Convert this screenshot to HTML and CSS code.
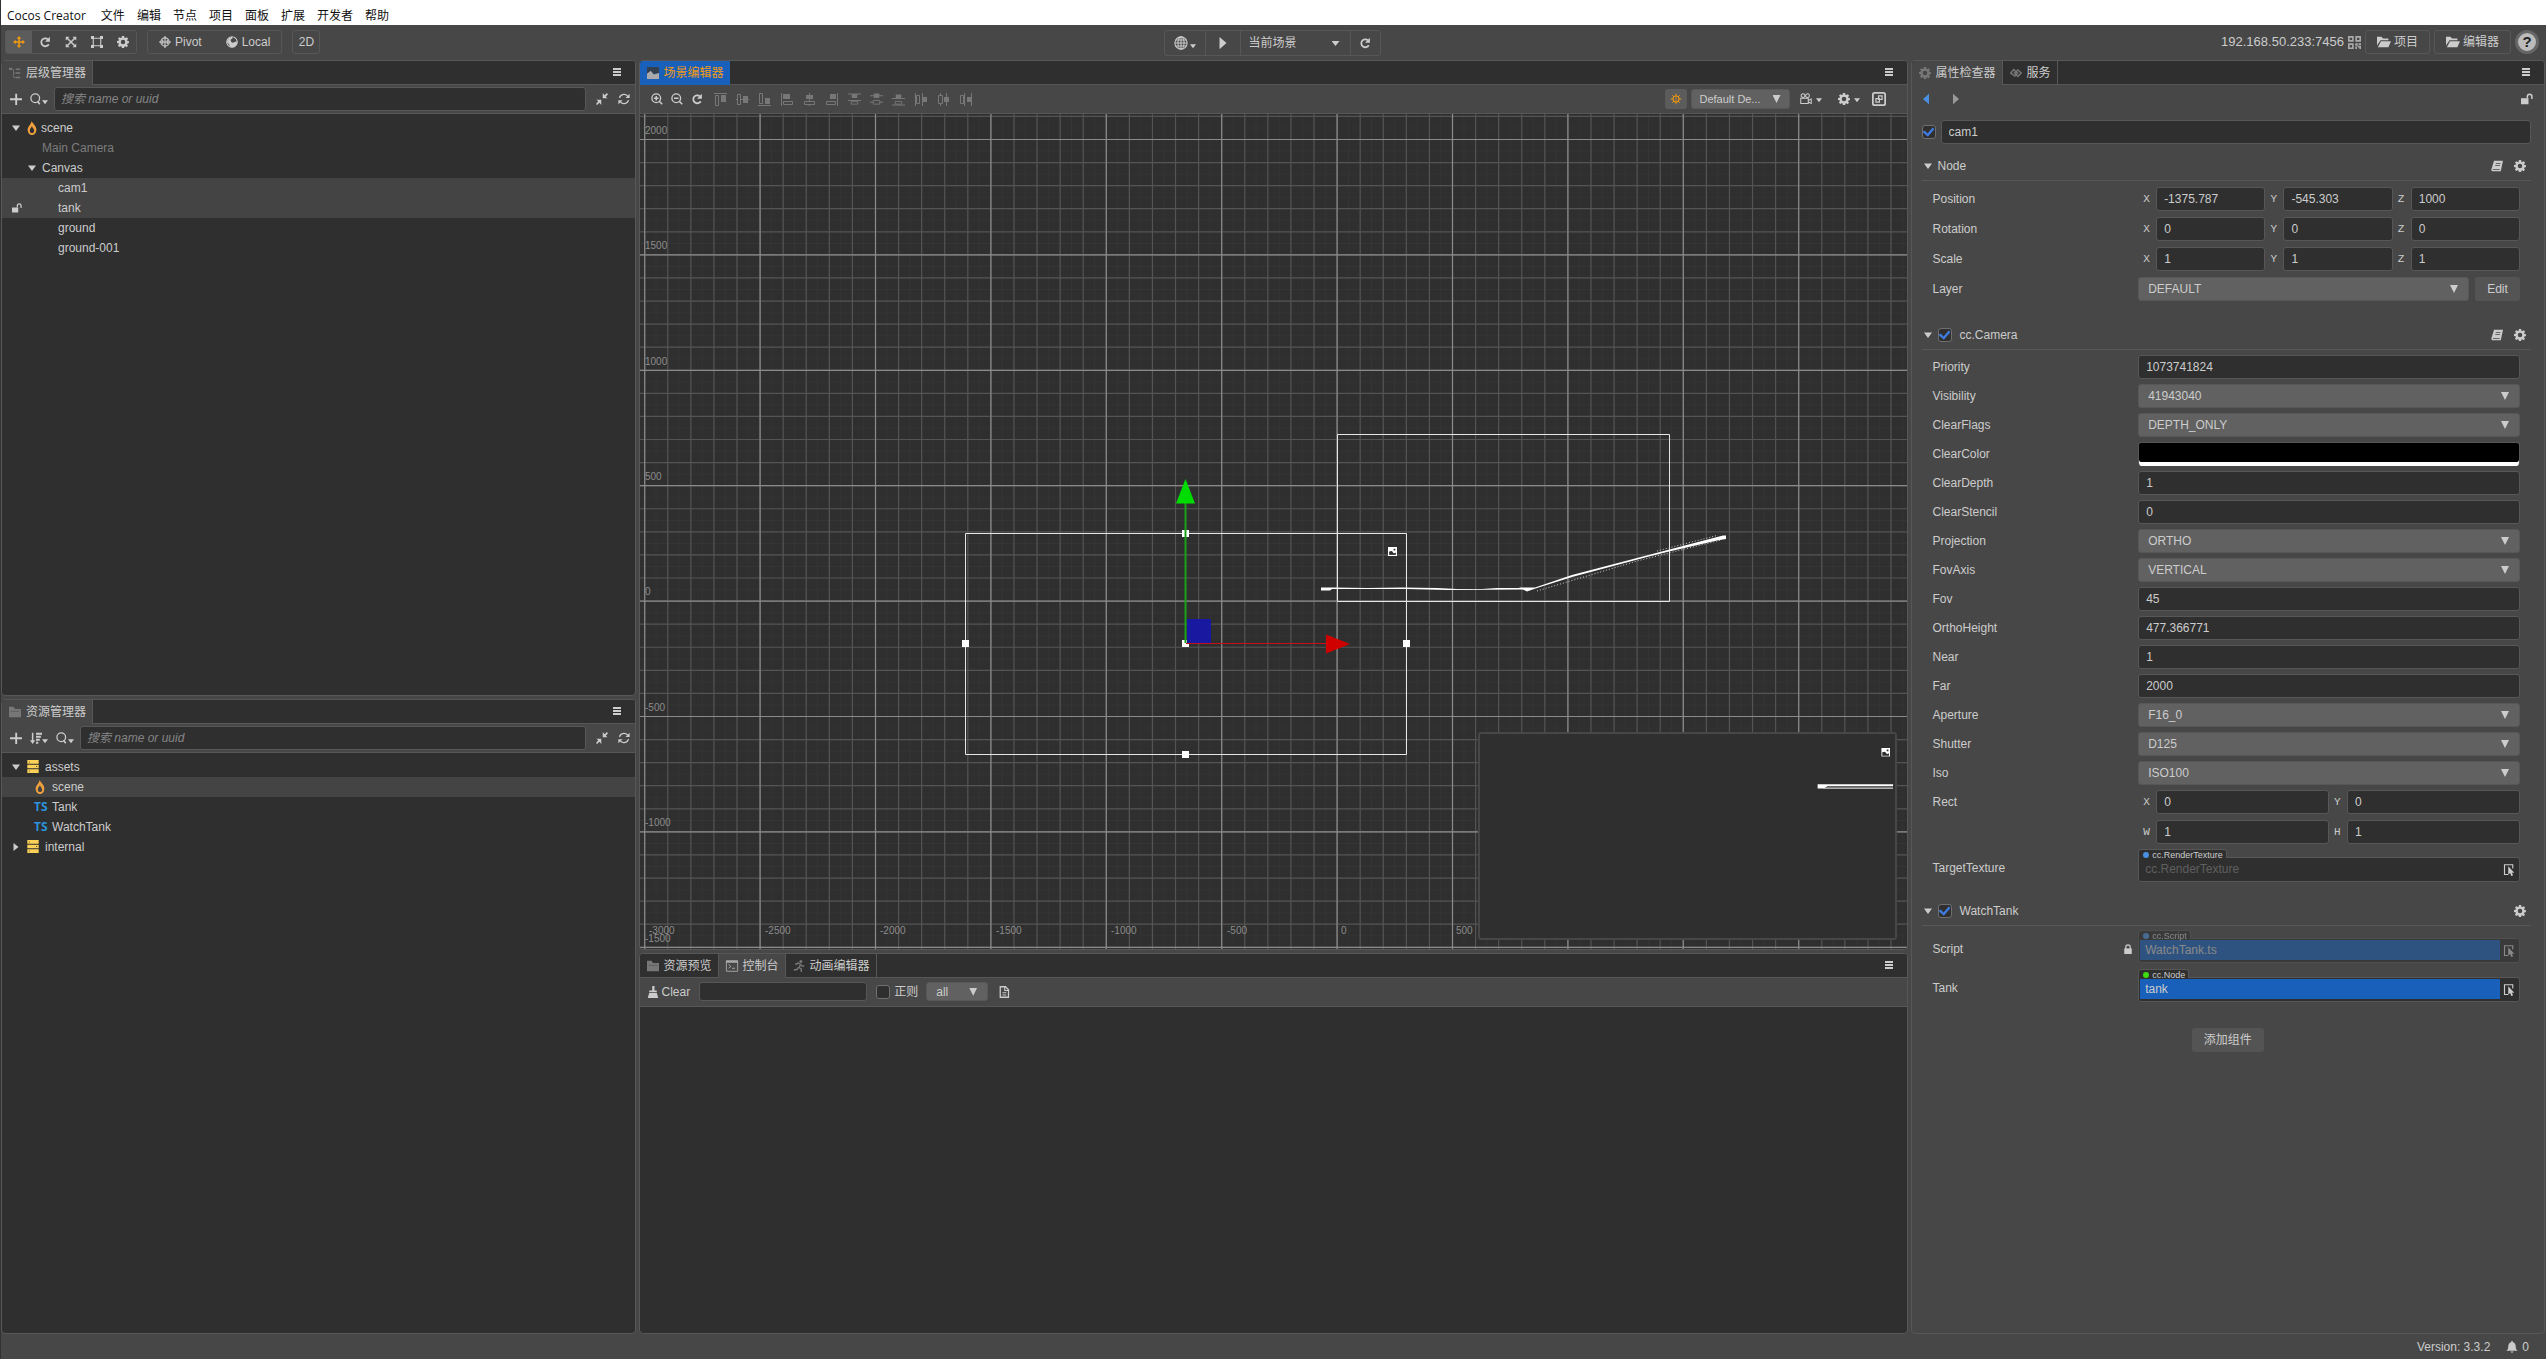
FILE: index.html
```html
<!DOCTYPE html>
<html lang="zh-CN">
<head>
<meta charset="utf-8">
<title>Cocos Creator</title>
<link rel="stylesheet" href="styles.css">
</head>
<body>
<svg class="defs" aria-hidden="true">
  <symbol id="i-move" viewBox="0 0 16 16"><path d="M8 0l3 3.500H9V7h3.500V5L16 8l-3.500 3V9H9v3.500h2L8 16l-3-3.500h2V9H3.500v2L0 8l3.500-3v2H7V3.500H5z"/></symbol>
  <symbol id="i-rotate" viewBox="0 0 16 16"><path d="M12 4.500A5.300 5.300 0 1 0 13 11" fill="none" stroke="currentColor" stroke-width="2.400"/><path d="M14.500 1v6.500H8z"/></symbol>
  <symbol id="i-scale" viewBox="0 0 16 16"><path d="M3 3l10 10M13 3L3 13" stroke="currentColor" stroke-width="2"/><path d="M1 1h5L1 6zM15 1v5l-5-5zM1 15v-5l5 5zM15 15h-5l5-5z"/></symbol>
  <symbol id="i-rect" viewBox="0 0 16 16"><path d="M3 3h10v10H3z" fill="none" stroke="currentColor" stroke-width="1.500"/><path d="M0 0h4v4H0zM12 0h4v4h-4zM0 12h4v4H0zM12 12h4v4h-4z"/></symbol>
  <symbol id="i-gear" viewBox="0 0 16 16"><path fill-rule="evenodd" d="M6.500 0h3l.4 2.200 1.300.6L13 1.500 14.900 3.600 13.500 5.300l.4 1.200L16 7v2.400l-2.100.5-.5 1.300 1.300 1.800-2 1.900-1.700-1.200-1.200.5L9.500 16h-3l-.4-2-1.300-.5L3 14.700 1.200 12.800l1.300-1.700L2 9.700 0 9.300V6.800l2.100-.5.5-1.200L1.300 3.400l2-1.900L5 2.700l1.200-.5zM8 5a3 3 0 1 0 0 6 3 3 0 0 0 0-6z"/></symbol>
  <symbol id="i-pivot" viewBox="0 0 16 16"><path d="M8 0v16M0 8h16M5 5v6M11 5v6" stroke="currentColor" stroke-width="1.500"/><circle cx="8" cy="8" r="5.500" fill="none" stroke="currentColor" stroke-width="1.600"/></symbol>
  <symbol id="i-local" viewBox="0 0 16 16"><circle cx="8" cy="8" r="7" fill="none" stroke="currentColor" stroke-width="1.500"/><path d="M1 8l3-5 4-2 1 2-3 2 1 3 2 1 5-2 1 3-4 5H6l-2-4z"/></symbol>
  <symbol id="i-globe" viewBox="0 0 16 16"><g fill="none" stroke="currentColor" stroke-width="1.200"><circle cx="8" cy="8" r="7"/><ellipse cx="8" cy="8" rx="3.500" ry="7"/><path d="M8 1v14M1 8h14M2 4.500h12M2 11.500h12"/></g></symbol>
  <symbol id="i-play" viewBox="0 0 16 16"><path d="M4 1l8 7-8 7z"/></symbol>
  <symbol id="i-back" viewBox="0 0 16 16"><path d="M12 1L4 8l8 7z"/></symbol>
  <symbol id="i-down" viewBox="0 0 16 16"><path d="M0 3h16L8 14z"/></symbol>
  <symbol id="i-right" viewBox="0 0 16 16"><path d="M3 0l10 8-10 8z"/></symbol>
  <symbol id="i-tree" viewBox="0 0 16 16"><path d="M0 1h4v3H0zM9 2h6v2H9zM9 7h6v2H9zM9 13h6v2H9z"/><path d="M2 3h4v11h4M6 8h3" fill="none" stroke="currentColor"/></symbol>
  <symbol id="i-plus" viewBox="0 0 16 16"><path d="M7 1h2.500v6H16v2.500H9.500V16H7V9.500H0V7h7z"/></symbol>
  <symbol id="i-search" viewBox="0 0 16 16"><circle cx="7" cy="7" r="5.800" fill="none" stroke="currentColor" stroke-width="1.700"/><path d="M10 11l3 4" stroke="currentColor" stroke-width="2"/></symbol>
  <symbol id="i-collapse" viewBox="0 0 16 16"><path d="M9 0v7h6.500L13 5l3-3.500L14.500 0 11.500 3zM7 16V9H.5L3 11l-3 3.500L1.500 16l3-3z"/></symbol>
  <symbol id="i-sync" viewBox="0 0 16 16"><path d="M2 6.500A6.300 6.300 0 0 1 13.500 5M14 9.500A6.300 6.300 0 0 1 2.500 11" fill="none" stroke="currentColor" stroke-width="1.700"/><path d="M15.500 1v5.500H10zM.5 15V9.500H6z"/></symbol>
  <symbol id="i-flame" viewBox="2 0 12 16"><path fill-rule="evenodd" d="M7.500 0c1 3 5.500 5 5.500 10a5 6 0 0 1-10 0C3 6.500 7 4 7.500 0zM8 6c-1 2-2.500 2.500-2.500 5 0 3.500 5 3.500 5 0C10.500 9 8.500 8 8 6z"/></symbol>
  <symbol id="i-unlock" viewBox="0 0 16 16"><path d="M0 7h10v8H0z"/><path d="M8.500 7V4.500a3 3 0 0 1 6 0V8" fill="none" stroke="currentColor" stroke-width="2"/></symbol>
  <symbol id="i-lock" viewBox="0 0 16 16"><path d="M2 7h12v9H2z"/><path d="M4.500 8V5a3.500 3.500 0 0 1 7 0v3" fill="none" stroke="currentColor" stroke-width="2"/></symbol>
  <symbol id="i-db" viewBox="0 0 16 16"><path fill-rule="evenodd" d="M1 0h14v4.500H1zM1 5.800h14v4.500H1zM1 11.500h14V16H1zM3 2v1h1V2zM12 7.500v1h1v-1zM3 13.200v1h1v-1z"/></symbol>
  <symbol id="i-sort" viewBox="0 0 16 16"><path d="M2.500 1h2v10H7l-3.500 5L0 11h2.500zM8 1h8v2.500H8zM8 5h6.500v2.500H8zM8 9h5v2.500H8zM8 13h3v2.500H8z"/></symbol>
  <symbol id="i-openfolder" viewBox="0 0 16 16"><path d="M0 12V2h5l2 2h6v2H4zM4.500 7H16l-3 7H1z"/></symbol>
  <symbol id="i-folder" viewBox="0 0 16 16"><path d="M0 1h6l2 3h8v11H0z"/><path d="M2 7h12" stroke="#555"/></symbol>
  <symbol id="i-qr" viewBox="0 0 16 16"><path fill-rule="evenodd" d="M0 0h7v7H0zM2 2v3h3V2zM9 0h7v7H9zM11 2v3h3V2zM0 9h7v7H0zM2 11v3h3v-3zM9 9h3v3H9zM13 9h3v2h-3zM9 13h2v3H9zM12 12h4v4h-2v-2h-2z"/></symbol>
  <symbol id="i-menu" viewBox="0 0 16 16"><path d="M0 0h16v4H0zM0 6h16v4H0zM0 12h16v4H0z"/></symbol>
  <symbol id="i-image" viewBox="0 0 16 16"><path fill-rule="evenodd" d="M0 0h16v16H0zM2 8v6h12v-4l-4 1-3-4zM10 3h3v3h-3z"/></symbol>
  <symbol id="i-scene" viewBox="0 0 16 16"><path d="M0 0h16v9H0z" fill="#33404f"/><path d="M0 9l5-4 4 5 7-2v8H0z"/></symbol>
  <symbol id="i-zoomin" viewBox="0 0 16 16"><circle cx="7" cy="7" r="5.800" fill="none" stroke="currentColor" stroke-width="1.800"/><path d="M11 11l4 4M7 4v6M4 7h6" stroke="currentColor" stroke-width="2"/></symbol>
  <symbol id="i-zoomout" viewBox="0 0 16 16"><circle cx="7" cy="7" r="5.800" fill="none" stroke="currentColor" stroke-width="1.800"/><path d="M11 11l4 4M4 7h6" stroke="currentColor" stroke-width="2"/></symbol>
  <symbol id="i-al1" viewBox="0 0 13 13"><path d="M0 0h13v1H0zM7 2h5v7H7z"/><path d="M1.500 2.500h3v10h-3z" fill="none" stroke="currentColor"/></symbol>
  <symbol id="i-al2" viewBox="0 0 13 13"><path d="M0 6h13v1H0zM7 3h5v7H7z"/><path d="M1.500 1.500h3v10h-3z" fill="#474747" stroke="currentColor"/></symbol>
  <symbol id="i-al3" viewBox="0 0 13 13"><path d="M0 12h13v1H0zM7 5h5v6H7z"/><path d="M1.500 .5h3v10h-3z" fill="none" stroke="currentColor"/></symbol>
  <symbol id="i-al4" viewBox="0 0 13 13"><path d="M0 0h1v13H0zM2 1h7v5H2z"/><path d="M2.500 8.500h9v3h-9z" fill="none" stroke="currentColor"/></symbol>
  <symbol id="i-al5" viewBox="0 0 13 13"><path d="M6 0h1v13H6zM3 2h7v4H3z"/><path d="M1.500 8.500h10v3h-10z" fill="#474747" stroke="currentColor"/></symbol>
  <symbol id="i-al6" viewBox="0 0 13 13"><path d="M12 0h1v13h-1zM5 1h6v5H5z"/><path d="M1.500 8.500h9v3h-9z" fill="none" stroke="currentColor"/></symbol>
  <symbol id="i-al7" viewBox="0 0 14 13"><path d="M0 0h14v1H0zM4 1h6v4H4zM0 7h14v1H0z"/><path d="M3.500 8.500h7v3h-7z" fill="none" stroke="currentColor"/></symbol>
  <symbol id="i-al8" viewBox="0 0 14 13"><path d="M0 2h14v1H0zM4 0h6v5H4zM0 9h14v1H0z"/><path d="M3.500 7.500h7v4h-7z" fill="#474747" stroke="currentColor"/></symbol>
  <symbol id="i-al9" viewBox="0 0 14 13"><path d="M0 5h14v1H0zM4 1h6v4H4zM0 12h14v1H0z"/><path d="M3.500 8.500h7v3h-7z" fill="none" stroke="currentColor"/></symbol>
  <symbol id="i-al10" viewBox="0 0 13 13"><path d="M0 0h1v13H0zM7 0h1v13H7zM8 4h4v5H8z"/><path d="M1.500 2.500h3v8h-3z" fill="none" stroke="currentColor"/></symbol>
  <symbol id="i-al11" viewBox="0 0 13 13"><path d="M3 0h1v13H3zM9 0h1v13H9zM7 4h5v5H7z"/><path d="M1.500 2.500h4v8h-4z" fill="#474747" stroke="currentColor"/></symbol>
  <symbol id="i-al12" viewBox="0 0 13 13"><path d="M5 0h1v13H5zM12 0h1v13h-1zM8 4h4v5H8z"/><path d="M1.500 2.500h3v8h-3z" fill="none" stroke="currentColor"/></symbol>
  <symbol id="i-sun" viewBox="0 0 16 16"><path d="M8 1v14M1 8h14M3 3l10 10M13 3L3 13" stroke="currentColor" stroke-width="1.300"/><circle cx="8" cy="8" r="4" fill="#5a5a5a" stroke="currentColor" stroke-width="1.400"/><path d="M8 5v6" stroke="currentColor"/></symbol>
  <symbol id="i-camera" viewBox="0 0 16 16"><g fill="none" stroke="currentColor" stroke-width="1.400"><circle cx="4" cy="3.500" r="2.500"/><circle cx="10" cy="3.500" r="2.500"/><path d="M1 7h10v7H1zM11 10l4-2v6l-4-2"/></g></symbol>
  <symbol id="i-expand" viewBox="0 0 16 16"><rect x="1" y="1" width="14" height="14" rx="2" fill="none" stroke="currentColor" stroke-width="2"/><path d="M4.500 7.500h4v4h-4zM7.500 4.500h4v4h-4z" fill="none" stroke="currentColor" stroke-width="1.400"/></symbol>
  <symbol id="i-console" viewBox="0 0 16 16"><path d="M.5 1h15v14H.5z" fill="none" stroke="currentColor" stroke-width="1.200"/><path d="M0 1h16v2.500H0z"/><path d="M3.500 6l3 2.500-3 2.500M8 11h4" fill="none" stroke="currentColor" stroke-width="1.300"/></symbol>
  <symbol id="i-run" viewBox="0 0 16 16"><circle cx="10.500" cy="2" r="2"/><path d="M3 6l4-2 3 2-2 4 3 2v4M7 10l-2 3H1M10 6l2 2h3" fill="none" stroke="currentColor" stroke-width="1.900"/></symbol>
  <symbol id="i-brush" viewBox="0 0 16 16"><path d="M7 0h3v6h3v2H3V6h4zM3 9h10l2 7H1z"/></symbol>
  <symbol id="i-doc" viewBox="0 0 16 16"><path d="M3 1h7l4 4v10H3z" fill="none" stroke="currentColor" stroke-width="1.700"/><path d="M9 1v5h5M6 9h5M6 12h5" fill="none" stroke="currentColor" stroke-width="1.500"/></symbol>
  <symbol id="i-book" viewBox="0 0 16 16"><path fill-rule="evenodd" d="M4 1h12l-3 14H1.500Q-.5 13 1 11zM6.500 4l-.3 1h6.300l.3-1zM5.800 6.600l-.3 1H12l.3-1zM2.500 12.300l-.3 1H11.500l.3-1z"/></symbol>
  <symbol id="i-pick" viewBox="0 0 16 16"><path d="M13 6V1H2v13h5" fill="none" stroke="currentColor" stroke-width="1.500"/><path d="M7 3v11l2.500-2 1.500 4 2.500-1-1.700-3.500H15z"/></symbol>
  <symbol id="i-link" viewBox="0 0 16 16"><g fill="none" stroke="currentColor" stroke-width="2"><path d="M5 3.500l5 4.500-3.500 4L1 8z"/><path d="M10.500 4L15 8l-4.500 4.500L6 8z"/></g></symbol>
  <symbol id="i-bell" viewBox="0 0 16 16"><path d="M7 0h2v1.500c3 .5 4 3 4 6 0 3 1 4 2.500 5.500H.5C2 11.500 3 10.500 3 7.500c0-3 1-5.500 4-6zM6 14h4q-2 3.500-4 0z"/></symbol>
</svg>

<nav class="menubar" aria-label="主菜单">
  <a class="app" href="#">Cocos Creator</a><a href="#">文件</a><a href="#">编辑</a><a href="#">节点</a><a href="#">项目</a><a href="#">面板</a><a href="#">扩展</a><a href="#">开发者</a><a href="#">帮助</a>
</nav>

<header class="topbar">
  <div class="cluster">
    <div class="group tools">
      <button class="on" aria-label="移动"><svg class="ic"><use href="#i-move"/></svg></button>
      <button aria-label="旋转"><svg class="ic"><use href="#i-rotate"/></svg></button>
      <button aria-label="缩放"><svg class="ic"><use href="#i-scale"/></svg></button>
      <button aria-label="矩形"><svg class="ic"><use href="#i-rect"/></svg></button>
      <button aria-label="设置"><svg class="ic"><use href="#i-gear"/></svg></button>
    </div>
    <div class="group modes">
      <button><svg class="ic"><use href="#i-pivot"/></svg>Pivot</button>
      <button><svg class="ic"><use href="#i-local"/></svg>Local</button>
    </div>
    <div class="group"><button class="dim2">2D</button></div>
  </div>
  <div class="group run">
    <button class="platform" aria-label="预览平台"><svg class="ic m"><use href="#i-globe"/></svg><svg class="ic xs"><use href="#i-down"/></svg></button>
    <button class="play" aria-label="播放"><svg class="ic m"><use href="#i-play"/></svg></button>
    <div class="picker current">
      <select aria-label="预览场景"><option>当前场景</option></select>
    </div>
    <button class="reload" aria-label="刷新"><svg class="ic s"><use href="#i-rotate"/></svg></button>
  </div>
  <div class="cluster end">
    <span class="address">192.168.50.233:7456</span>
    <svg class="ic qr"><use href="#i-qr"/></svg>
    <button class="outlined"><svg class="ic m"><use href="#i-openfolder"/></svg>项目</button>
    <button class="outlined"><svg class="ic m"><use href="#i-openfolder"/></svg>编辑器</button>
    <button class="help">?</button>
  </div>
</header>

<main class="workspace">
  <div class="column halves">
    <section class="panel">
      <div class="tabs"><button class="tab active"><svg class="ic"><use href="#i-tree"/></svg>层级管理器</button><button class="more" aria-label="菜单"><svg class="ic"><use href="#i-menu"/></svg></button></div>
      <div class="bar find">
        <button aria-label="新建"><svg class="ic s"><use href="#i-plus"/></svg></button>
        <button aria-label="搜索类型"><svg class="ic s"><use href="#i-search"/></svg><svg class="ic xs"><use href="#i-down"/></svg></button>
        <input type="text" placeholder="搜索 name or uuid" aria-label="搜索节点">
        <button aria-label="折叠"><svg class="ic s"><use href="#i-collapse"/></svg></button>
        <button aria-label="刷新"><svg class="ic s"><use href="#i-sync"/></svg></button>
      </div>
      <ul class="tree">
        <li><svg class="ic caret"><use href="#i-down"/></svg><svg class="ic flame"><use href="#i-flame"/></svg>scene</li>
        <li class="off d1">Main Camera</li>
        <li class="branch"><svg class="ic caret"><use href="#i-down"/></svg>Canvas</li>
        <li class="sel d2">cam1</li>
        <li class="sel locked"><svg class="ic"><use href="#i-unlock"/></svg>tank</li>
        <li class="d2">ground</li>
        <li class="d2">ground-001</li>
      </ul>
    </section>
    <section class="panel">
      <div class="tabs"><button class="tab active"><svg class="ic"><use href="#i-folder"/></svg>资源管理器</button><button class="more" aria-label="菜单"><svg class="ic"><use href="#i-menu"/></svg></button></div>
      <div class="bar find">
        <button aria-label="新建"><svg class="ic s"><use href="#i-plus"/></svg></button>
        <button aria-label="排序"><svg class="ic s"><use href="#i-sort"/></svg><svg class="ic xs"><use href="#i-down"/></svg></button>
        <button aria-label="搜索类型"><svg class="ic s"><use href="#i-search"/></svg><svg class="ic xs"><use href="#i-down"/></svg></button>
        <input type="text" placeholder="搜索 name or uuid" aria-label="搜索资源">
        <button aria-label="折叠"><svg class="ic s"><use href="#i-collapse"/></svg></button>
        <button aria-label="刷新"><svg class="ic s"><use href="#i-sync"/></svg></button>
      </div>
      <ul class="tree assets">
        <li><svg class="ic caret"><use href="#i-down"/></svg><svg class="ic db"><use href="#i-db"/></svg>assets</li>
        <li class="sel child"><svg class="ic flame"><use href="#i-flame"/></svg>scene</li>
        <li class="child"><b>TS</b>Tank</li>
        <li class="child"><b>TS</b>WatchTank</li>
        <li><svg class="ic caret"><use href="#i-right"/></svg><svg class="ic db"><use href="#i-db"/></svg>internal</li>
      </ul>
    </section>
  </div>

  <div class="column center">
    <section class="panel">
      <div class="tabs"><button class="tab focus"><svg class="ic"><use href="#i-scene"/></svg>场景编辑器</button><button class="more" aria-label="菜单"><svg class="ic"><use href="#i-menu"/></svg></button></div>
      <div class="bar scenebar">
        <button aria-label="放大"><svg class="ic s"><use href="#i-zoomin"/></svg></button>
        <button aria-label="缩小"><svg class="ic s"><use href="#i-zoomout"/></svg></button>
        <button aria-label="重置"><svg class="ic s"><use href="#i-rotate"/></svg></button>
        <div class="aligns">
          <button aria-label="顶对齐"><svg class="ic al"><use href="#i-al1"/></svg></button><button aria-label="垂直居中"><svg class="ic al"><use href="#i-al2"/></svg></button><button aria-label="底对齐"><svg class="ic al"><use href="#i-al3"/></svg></button><button aria-label="左对齐"><svg class="ic al"><use href="#i-al4"/></svg></button><button aria-label="水平居中"><svg class="ic al"><use href="#i-al5"/></svg></button><button aria-label="右对齐"><svg class="ic al"><use href="#i-al6"/></svg></button><button aria-label="顶分布"><svg class="ic al"><use href="#i-al7"/></svg></button><button aria-label="垂直分布"><svg class="ic al"><use href="#i-al8"/></svg></button><button aria-label="底分布"><svg class="ic al"><use href="#i-al9"/></svg></button><button aria-label="左分布"><svg class="ic al"><use href="#i-al10"/></svg></button><button aria-label="水平分布"><svg class="ic al"><use href="#i-al11"/></svg></button><button aria-label="右分布"><svg class="ic al"><use href="#i-al12"/></svg></button>
        </div>
        <div class="sceneopts">
          <button class="light" aria-label="光照"><svg class="ic s"><use href="#i-sun"/></svg></button>
          <div class="picker design"><select aria-label="设计分辨率"><option>Default De...</option></select></div>
          <button aria-label="相机"><svg class="ic s"><use href="#i-camera"/></svg><svg class="ic xs"><use href="#i-down"/></svg></button>
          <button aria-label="设置"><svg class="ic s"><use href="#i-gear"/></svg><svg class="ic xs"><use href="#i-down"/></svg></button>
          <button aria-label="展开"><svg class="ic m"><use href="#i-expand"/></svg></button>
        </div>
      </div>
      <div class="scene">
        <svg class="stage" role="img" aria-label="场景">
          <g transform="translate(697 487)">
            <g class="grid">
              <path class="fine" d="M-693 0H2000" stroke-dasharray="1 10.540"/>
              <path class="fine" d="M0 -485V2000" stroke-dasharray="1 10.540"/>
              <path class="minor" d="M-692.900 0H2000" stroke-dasharray="1.200 21.880"/>
              <path class="minor" d="M0 -485.200V2000" stroke-dasharray="1.200 21.880"/>
              <path class="major" d="M-692.900 0H2000" stroke-dasharray="1.200 114.200"/>
              <path class="major" d="M0 -462.100V2000" stroke-dasharray="1.200 114.200"/>
            </g>
            <g class="ruler">
              <text x="-692" y="-467">2000</text><text x="-692" y="-352">1500</text><text x="-692" y="-236">1000</text><text x="-692" y="-121">500</text><text x="-692" y="-6">0</text><text x="-692" y="110">-500</text><text x="-692" y="225">-1000</text><text x="-692" y="341">-1500</text>
              <text x="-688" y="333">-3000</text><text x="-572" y="333">-2500</text><text x="-457" y="333">-2000</text><text x="-341" y="333">-1500</text><text x="-226" y="333">-1000</text><text x="-110" y="333">-500</text><text x="4" y="333">0</text><text x="119" y="333">500</text>
            </g>
            <g class="bounds">
              <path d="M.5 -166.500H332.500V.5H.5z"/>
              <path d="M-371.500 -67.500H69.500V153.500H-371.500z"/>
            </g>
            <g fill="#fff">
              <path d="M-16 -13.500H-5L30 -13 65 -13.500 100 -13 120 -12 145 -12 160 -13H190L186 -11.500 110 -11 70 -12 30 -12 -5 -12 -7 -10.500H-16z"/>
              <path d="M182 -13.500H198L235 -26 300 -43 386 -65.500 389 -65.500V-62L380 -60.500 330 -49 310 -44 235 -24 200 -13 190 -9.500z"/>
              <path d="M200 -10L300 -40 384 -61M320 -50L380 -65.500" stroke="#ccc" stroke-dasharray="1 2" fill="none"/>
            </g>
            <svg x="51" y="-54" width="9" height="9" fill="#fff"><use href="#i-image"/></svg>
            <g fill="#fff"><path d="M-155 -71h7v7h-7zM-155 150h7v7h-7zM-375 39h7v7h-7zM66 39h7v7h-7zM-155 39h7v7h-7z"/></g>
            <path d="M-150 18h24v24h-24z" fill="#1818a0"/>
            <path d="M-151.500 42V-98" stroke="#18a018" stroke-width="2"/>
            <path d="M-151.500 -122l9.500 24.500h-19z" fill="#00dc00"/>
            <path d="M-151 42.500H-11" stroke="#c8101c"/>
            <path d="M13 43L-11 33.500v19z" fill="#d00000"/>
          </g>
        </svg>
        <div class="preview">
          <svg role="img" aria-label="相机预览" width="100%" height="100%" viewBox="0 0 415 205"><svg x="403" y="14" width="9" height="9" fill="#fff"><use href="#i-image"/></svg><path d="M339 50.500H415V52.500H349L345 55H339z" fill="#fff"/><path d="M345 54.500H415" stroke="#fff"/></svg>
        </div>
      </div>
    </section>
    <section class="panel">
      <div class="tabs"><button class="tab"><svg class="ic"><use href="#i-folder"/></svg>资源预览</button><button class="tab active console"><svg class="ic"><use href="#i-console"/></svg>控制台</button><button class="tab"><svg class="ic"><use href="#i-run"/></svg>动画编辑器</button><button class="more" aria-label="菜单"><svg class="ic"><use href="#i-menu"/></svg></button></div>
      <div class="bar logbar">
        <button><svg class="ic s"><use href="#i-brush"/></svg>Clear</button>
        <input class="filter" type="text" aria-label="过滤">
        <label class="regex"><input type="checkbox">正则</label>
        <div class="picker level"><select aria-label="日志级别"><option>all</option></select></div>
        <button aria-label="日志文件"><svg class="ic s"><use href="#i-doc"/></svg></button>
      </div>
      <div class="log"></div>
    </section>
  </div>

  <section class="panel inspector">
    <div class="tabs"><button class="tab active"><svg class="ic"><use href="#i-gear"/></svg>属性检查器</button><button class="tab"><svg class="ic"><use href="#i-link"/></svg>服务</button><button class="more" aria-label="菜单"><svg class="ic"><use href="#i-menu"/></svg></button></div>
    <div class="history">
      <button class="prev" aria-label="后退"><svg class="ic s"><use href="#i-back"/></svg></button>
      <button class="next" aria-label="前进"><svg class="ic s"><use href="#i-play"/></svg></button>
      <button class="pin" aria-label="锁定"><svg class="ic s"><use href="#i-unlock"/></svg></button>
    </div>
    <div class="name"><input type="checkbox" checked aria-label="启用节点"><input type="text" value="cam1" aria-label="节点名"></div>

    <section class="comp node">
      <h2><svg class="ic caret"><use href="#i-down"/></svg>Node<span class="acts"><button aria-label="文档"><svg class="ic s"><use href="#i-book"/></svg></button><button aria-label="设置"><svg class="ic s"><use href="#i-gear"/></svg></button></span></h2>
      <div class="props">
        <div class="prop"><span>Position</span><div class="vec"><label>X<input type="text" value="-1375.787"></label><label>Y<input type="text" value="-545.303"></label><label>Z<input type="text" value="1000"></label></div></div>
        <div class="prop"><span>Rotation</span><div class="vec"><label>X<input type="text" value="0"></label><label>Y<input type="text" value="0"></label><label>Z<input type="text" value="0"></label></div></div>
        <div class="prop"><span>Scale</span><div class="vec"><label>X<input type="text" value="1"></label><label>Y<input type="text" value="1"></label><label>Z<input type="text" value="1"></label></div></div>
        <div class="prop"><label for="layer">Layer</label><div class="withbtn"><div class="picker"><select id="layer"><option>DEFAULT</option></select></div><button class="edit">Edit</button></div></div>
      </div>
    </section>

    <section class="comp camera">
      <h2><svg class="ic caret"><use href="#i-down"/></svg><input type="checkbox" id="camon" checked><label for="camon">cc.Camera</label><span class="acts"><button aria-label="文档"><svg class="ic s"><use href="#i-book"/></svg></button><button aria-label="设置"><svg class="ic s"><use href="#i-gear"/></svg></button></span></h2>
      <div class="props">
        <div class="prop"><label for="p1">Priority</label><input id="p1" type="text" value="1073741824"></div>
        <div class="prop"><label for="p2">Visibility</label><div class="picker"><select id="p2"><option>41943040</option></select></div></div>
        <div class="prop"><label for="p3">ClearFlags</label><div class="picker"><select id="p3"><option>DEPTH_ONLY</option></select></div></div>
        <div class="prop"><label for="p4">ClearColor</label><button id="p4" class="swatch" aria-label="ClearColor"></button></div>
        <div class="prop"><label for="p5">ClearDepth</label><input id="p5" type="text" value="1"></div>
        <div class="prop"><label for="p6">ClearStencil</label><input id="p6" type="text" value="0"></div>
        <div class="prop"><label for="p7">Projection</label><div class="picker"><select id="p7"><option>ORTHO</option></select></div></div>
        <div class="prop"><label for="p8">FovAxis</label><div class="picker"><select id="p8"><option>VERTICAL</option></select></div></div>
        <div class="prop"><label for="p9">Fov</label><input id="p9" type="text" value="45"></div>
        <div class="prop"><label for="p10">OrthoHeight</label><input id="p10" type="text" value="477.366771"></div>
        <div class="prop"><label for="p11">Near</label><input id="p11" type="text" value="1"></div>
        <div class="prop"><label for="p12">Far</label><input id="p12" type="text" value="2000"></div>
        <div class="prop"><label for="p13">Aperture</label><div class="picker"><select id="p13"><option>F16_0</option></select></div></div>
        <div class="prop"><label for="p14">Shutter</label><div class="picker"><select id="p14"><option>D125</option></select></div></div>
        <div class="prop"><label for="p15">Iso</label><div class="picker"><select id="p15"><option>ISO100</option></select></div></div>
        <div class="prop top"><span>Rect</span><div class="vec two"><label>X<input type="text" value="0"></label><label>Y<input type="text" value="0"></label><label>W<input type="text" value="1"></label><label>H<input type="text" value="1"></label></div></div>
        <div class="prop ref"><label for="p16">TargetTexture</label><div class="asset"><span class="tag">cc.RenderTexture</span><div class="slot"><input id="p16" type="text" placeholder="cc.RenderTexture"><button aria-label="选择"><svg class="ic s"><use href="#i-pick"/></svg></button></div></div></div>
      </div>
    </section>

    <section class="comp watch">
      <h2><svg class="ic caret"><use href="#i-down"/></svg><input type="checkbox" id="wton" checked><label for="wton">WatchTank</label><span class="acts"><button aria-label="设置"><svg class="ic s"><use href="#i-gear"/></svg></button></span></h2>
      <div class="props">
        <div class="prop ref"><label for="p17" class="fixed">Script<svg class="ic"><use href="#i-lock"/></svg></label><div class="asset filled disabled"><span class="tag">cc.Script</span><div class="slot"><input id="p17" type="text" value="WatchTank.ts" readonly><button aria-label="选择"><svg class="ic s"><use href="#i-pick"/></svg></button></div></div></div>
        <div class="prop ref"><label for="p18">Tank</label><div class="asset filled green"><span class="tag">cc.Node</span><div class="slot"><input id="p18" type="text" value="tank"><button aria-label="选择"><svg class="ic s"><use href="#i-pick"/></svg></button></div></div></div>
      </div>
    </section>
    <button class="add">添加组件</button>
  </section>
</main>

<footer class="status"><span>Version: 3.3.2</span><svg class="ic s"><use href="#i-bell"/></svg><span>0</span></footer>
</body>
</html>
```
FILE: styles.css
```css
:root {
  --bg: #474747;
  --dark: #2f2f2f;
  --line: #575757;
  --text: #ccc;
  --pick: #616161;
}
* { box-sizing: border-box; }
body {
  margin: 0;
  height: 100vh;
  display: flex;
  flex-direction: column;
  background: var(--bg);
  color: var(--text);
  border-left: 1px solid #333;
  font: 12px/16px "Liberation Sans", Arial, "Noto Sans CJK SC", sans-serif;
  overflow: hidden;
}
button, input, select { font: inherit; color: inherit; margin: 0; }
button {
  display: inline-flex;
  align-items: center;
  justify-content: center;
  padding: 0;
  border: 0;
  background: none;
}
.defs { position: absolute; width: 0; height: 0; }
.ic { width: 13px; height: 13px; fill: currentColor; flex: none; }
.ic.m { width: 14px; height: 14px; }
.ic.s { width: 12px; height: 12px; }
.ic.xs { width: 6px; height: 6px; margin-top: 6px; }

.menubar {
  height: 25px;
  flex: none;
  display: flex;
  gap: 12px;
  padding: 8px 6px 0;
  background: #fff;
}
.menubar a {
  color: #111;
  text-decoration: none;
  font-family: "Open Sans", "Noto Sans CJK SC", sans-serif;
}
.menubar .app { margin-right: 3px; }

.topbar {
  height: 35px;
  flex: none;
  display: grid;
  grid-template-columns: 1fr auto 1fr;
  align-items: start;
  padding: 5px 7px 0 4px;
}
.cluster { display: flex; gap: 10px; align-items: center; }
.cluster.end { justify-content: flex-end; gap: 4px; }
.group {
  display: flex;
  height: 24px;
  border: 1px solid var(--line);
  border-radius: 3px;
}
.tools button { width: 26px; }
.tools .ic { width: 12px; height: 12px; }
.tools .on { background: #5c5c5c; color: #f39a12; }
.modes { padding: 0 11px; gap: 24px; }
.modes button { gap: 4px; }
.modes .ic { width: 12px; height: 12px; }
.dim2 { width: 26px; }
.run { height: 26px; }
.run > * + * { border-left: 1px solid var(--line); }
.run .platform { width: 40px; gap: 2px; }
.run .play { width: 35px; }
.run .reload { width: 30px; }
.picker {
  position: relative;
  height: 24px;
  border: 1px solid var(--line);
  border-radius: 3px;
  background: var(--pick);
}
.picker::after {
  content: "";
  position: absolute;
  right: 10px;
  top: 50%;
  width: 8px;
  height: 8px;
  margin-top: -4px;
  background: var(--text);
  clip-path: polygon(0 0, 100% 0, 50% 100%);
  pointer-events: none;
}
.picker select {
  display: block;
  width: 100%;
  height: 100%;
  padding: 0 9px;
  border: 0;
  background: none;
  appearance: none;
}
.picker.current {
  width: 110px;
  background: none;
  border-width: 0 0 0 1px;
  border-radius: 0;
}
.picker.current select { padding: 0 8px; }
.picker.current::after { width: 8px; height: 5px; margin-top: -2px; }
.address { font-size: 13px; line-height: 22px; }
.qr { color: #aaa; }
.outlined {
  height: 24px;
  gap: 3px;
  padding: 0 11px;
  border: 1px solid var(--line);
  border-radius: 3px;
}
.help {
  width: 24px;
  height: 24px;
  border: 3px solid #666;
  border-radius: 50%;
  background: #bbb;
  color: #222;
  font-size: 15px;
  font-weight: bold;
}

.workspace {
  flex: 1;
  min-height: 0;
  display: grid;
  grid-template-columns: 1fr 2fr 1fr;
  gap: 3px;
  padding-right: 1px;
}
.column { display: grid; gap: 3px; min-width: 0; min-height: 0; }
.halves { grid-template-rows: 1fr 1fr; }
.center { grid-template-rows: minmax(0, 7fr) minmax(0, 3fr); }
.panel {
  display: flex;
  flex-direction: column;
  min-width: 0;
  min-height: 0;
  border: 1px solid var(--line);
  border-radius: 4px;
  overflow: hidden;
  background: var(--dark);
}
.tabs {
  flex: none;
  display: flex;
  height: 24px;
  background: var(--dark);
  box-shadow: inset 0 -1px var(--line);
}
.tab { gap: 5px; padding: 0 6px 0 7px; border-right: 1px solid var(--line); }
.tab .ic { width: 12px; height: 12px; color: #777; }
.tab.active { background: var(--bg); }
.tab.focus { background: #1860ba; color: #f39a12; border: 0; }
.tab.focus .ic { color: #aaa; }
.tab.console .ic { width: 14px; color: #aaa; }
.tab.console { gap: 4px; padding-left: 6px; }
.more { margin-left: auto; padding: 0 14px 2px; }
.more .ic { width: 8px; height: 8px; }
.bar {
  flex: none;
  display: flex;
  align-items: center;
  height: 29px;
  background: var(--bg);
  border-bottom: 1px solid var(--line);
}
.find { gap: 8px; padding: 0 5px 0 8px; }
.find button:last-child { margin-left: 2px; }
.find input { flex: 1; min-width: 0; margin-right: 2px; margin-left: -2px; }
input[type="text"] {
  height: 24px;
  min-width: 0;
  width: 100%;
  padding: 0 7px;
  border: 1px solid var(--line);
  border-radius: 3px;
  background: var(--dark);
}
.find input[type="text"] { padding: 0 6px; }
::placeholder { color: #858585; opacity: 1; font-style: italic; }
input[type="checkbox"] {
  appearance: none;
  position: relative;
  flex: none;
  width: 14px;
  height: 14px;
  border: 1px solid #707070;
  border-radius: 3px;
  background: var(--dark);
}
input[type="checkbox"]:checked::after {
  content: "";
  position: absolute;
  inset: 1px 0;
  background: #3f7ae0;
  clip-path: polygon(0 50%, 18% 36%, 42% 64%, 84% 6%, 100% 20%, 45% 98%);
}

.tree { list-style: none; margin: 0; padding: 4px 0 0; }
.tree.assets { padding-top: 4px; }
.tree li { display: flex; align-items: center; height: 20px; padding-left: 10px; }
.tree .sel { background: #444; }
.tree .off { color: #7c7c7c; }
.tree .caret { width: 8px; height: 8px; margin-right: 6px; }
.tree .branch { padding-left: 26px; }
.tree .d1 { padding-left: 40px; }
.tree .d2 { padding-left: 56px; }
.tree .locked .ic { width: 10px; height: 10px; margin-right: 36px; }
.tree .flame { width: 12px; height: 14px; color: #f0a03c; margin-right: 3px; }
.tree .db { width: 14px; height: 13px; color: #fbd158; margin-right: 5px; }
.tree .child { padding-left: 32px; }
.assets .flame { margin-right: 6px; }
.tree b { width: 18px; color: #2c93dc; font-family: "Open Sans", sans-serif; font-size: 12px; }

.scenebar { gap: 8px; padding: 0 21px 0 11px; }
.aligns { display: flex; gap: 9px; margin-left: 2px; color: #777; }
.aligns .al { width: 13px; height: 13px; }
.aligns button:nth-child(3n+1) { margin-left: 1px; }
.sceneopts { display: flex; align-items: center; margin-left: auto; gap: 16px; }
.sceneopts .light {
  width: 22px;
  height: 20px;
  border-radius: 3px;
  background: #5c5c5c;
  color: #f39a12;
  margin-right: -12px;
}
.sceneopts button { gap: 4px; }
.sceneopts .xs { margin-top: 1px; }
.sceneopts .picker { width: 99px; height: 20px; margin-right: -6px; }
.sceneopts .picker select { padding: 0 8px; font-size: 11px; }
.sceneopts .picker::after { right: 8px; }
.sceneopts button:last-child { margin-left: -4px; }
.scene { position: relative; flex: 1; min-height: 0; overflow: hidden; }
.stage { position: absolute; inset: 0; width: 100%; height: 100%; }
.grid path { fill: none; stroke-width: 4000; }
.grid .fine { stroke: #353535; }
.grid .minor { stroke: #545454; }
.grid .major { stroke: #8a8a8a; }
.ruler { fill: #8c8c8c; font-size: 10px; }
.bounds { fill: none; stroke: #e6e6e6; }
.preview {
  position: absolute;
  right: 10px;
  bottom: 9px;
  width: 33%;
  aspect-ratio: 417 / 207;
  border: 2px solid #474747;
  border-radius: 3px;
  background: var(--dark);
}
.preview svg { display: block; }

.logbar { padding-left: 7px; }
.logbar button { gap: 3px; }
.logbar input.filter { width: 168px; height: 19px; margin: 0 9px; }
.regex { display: flex; align-items: center; gap: 4px; }
.level { width: 62px; height: 19px; margin: 0 10px 0 8px; }
.level select { padding: 0 9px; }
.log { flex: 1; }

.inspector { background: var(--bg); }
.history { display: flex; align-items: center; height: 27px; padding: 0 11px 0 8px; flex: none; }
.history .next { margin-left: 18px; color: #999; }
.history .prev { color: #4a90e2; }
.history .pin { margin-left: auto; }
.name { display: flex; align-items: center; gap: 5px; padding: 8px 13px 8px 10px; }
.comp { padding: 0 13px 0 10px; }
.comp h2 {
  display: flex;
  align-items: center;
  height: 29px;
  margin: 0;
  border-bottom: 1px solid var(--line);
  font: inherit;
}
.comp .caret { width: 8px; height: 8px; margin: 0 6px 0 2px; }
.comp h2 label { margin-left: 8px; }
.acts { display: flex; gap: 11px; margin-left: auto; padding-right: 5px; }
.props { display: flex; flex-direction: column; gap: 5px; padding: 5px 11px 15px; }
.node .props { gap: 6px; padding: 6px 11px 20px; }
.watch .props { gap: 6px; padding: 4px 11px 26px; }
.prop { display: grid; grid-template-columns: 35% 1fr; align-items: center; }
.prop.top { align-items: start; line-height: 24px; }
.prop.ref > label { padding-top: 5px; }
.vec { display: grid; grid-template-columns: repeat(3, 1fr); row-gap: 6px; }
.vec.two { grid-template-columns: repeat(2, 1fr); }
.vec label {
  display: grid;
  grid-template-columns: 18px 1fr;
  align-items: center;
  text-indent: 5px;
  font-family: "Liberation Mono", monospace;
  font-size: 11px;
}
.vec input { font-family: "Liberation Sans", sans-serif; font-size: 12px; text-indent: 0; }
.withbtn { display: flex; gap: 6px; }
.withbtn .picker { flex: 1; }
.edit { width: 45px; border-radius: 3px; background: #545454; }
.swatch { height: 24px; border: 1px solid var(--line); border-bottom: 0; border-radius: 3px; background: #000; box-shadow: inset 0 -4px #fff; }
.asset { display: flex; flex-direction: column; align-items: flex-start; }
.tag {
  position: relative;
  height: 9px;
  margin-bottom: -1px;
  padding: 0 3px 0 13px;
  border: 1px solid var(--line);
  border-bottom: 0;
  border-radius: 3px 3px 0 0;
  background: var(--dark);
  font-size: 9px;
  line-height: 10px;
}
.tag::before {
  content: "";
  position: absolute;
  left: 4px;
  top: 2px;
  width: 6px;
  height: 6px;
  border-radius: 50%;
  background: #4a90e2;
}
.green .tag::before { background: #3fdc10; }
.slot {
  display: flex;
  width: 100%;
  height: 25px;
  padding: 1px;
  border: 1px solid var(--line);
  border-radius: 0 3px 3px 3px;
  background: var(--dark);
}
.slot input[type="text"] { flex: 1; height: 20px; padding: 0 5px; border: 0; border-radius: 0; }
.slot ::placeholder { font-style: normal; color: #5f5f5f; }
.slot button { width: 18px; }
.filled .slot input[type="text"] { background: #1860ba; }
.disabled { opacity: .5; }
.fixed { display: flex; justify-content: space-between; align-items: center; padding-right: 5px; }
.fixed .ic { width: 10px; height: 10px; }
.add { align-self: center; width: 72px; height: 24px; border-radius: 3px; background: #545454; flex: none; }

.status { flex: none; height: 25px; display: flex; align-items: center; justify-content: flex-end; gap: 4px; padding-right: 17px; }
.status .ic { margin-left: 12px; }
```
